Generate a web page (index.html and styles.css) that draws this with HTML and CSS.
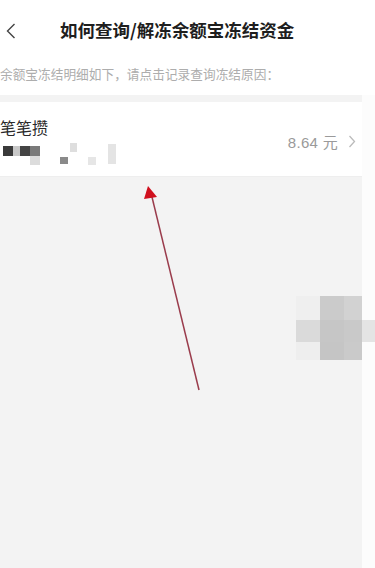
FILE: index.html
```html
<!DOCTYPE html>
<html lang="zh-CN">
<head>
<meta charset="utf-8">
<title>如何查询/解冻余额宝冻结资金</title>
<link rel="stylesheet" href="styles.css">
</head>
<body>
<div class="page">
  <header class="header">
    <svg class="back" width="10" height="16" viewBox="0 0 10 16"><path d="M8.5 1 L1.5 8 L8.5 15" fill="none" stroke="#444" stroke-width="1.4"/></svg>
    <h1 class="title">如何查询/解冻余额宝冻结资金</h1>
  </header>
  <p class="hint">余额宝冻结明细如下，请点击记录查询冻结原因：</p>
  <div class="body">
    <div class="main">
      <div class="card">
        <div class="info">
          <div class="name">笔笔攒</div>
          <div class="blur">
            <span class="px" style="left:0;top:0;width:10px;height:10px;background:#3a3a3a"></span>
            <span class="px" style="left:10px;top:0;width:7px;height:10px;background:#c8c8c8"></span>
            <span class="px" style="left:17px;top:0;width:10px;height:10px;background:#444"></span>
            <span class="px" style="left:27px;top:0;width:10px;height:10px;background:#7a7a7a"></span>
            <span class="px" style="left:27px;top:10px;width:10px;height:9px;background:#dcdcdc"></span>
            <span class="px" style="left:57px;top:11px;width:8px;height:7px;background:#8a8a8a"></span>
            <span class="px" style="left:67px;top:-3px;width:7px;height:9px;background:#dedede"></span>
            <span class="px" style="left:85px;top:11px;width:8px;height:8px;background:#e6e6e6"></span>
            <span class="px" style="left:105px;top:-2px;width:8px;height:20px;background:#e4e4e4"></span>
          </div>
        </div>
        <div class="amount">8.64 元</div>
        <svg class="chev" width="8" height="13" viewBox="0 0 8 13"><path d="M1.5 1 L6.5 6.5 L1.5 12" fill="none" stroke="#bbb" stroke-width="1.3"/></svg>
      </div>
    </div>
    <div class="strip"></div>
  </div>
  <div class="mosaic">
    <span class="m" style="background:#efefef"></span>
    <span class="m" style="background:#cbcbcb"></span>
    <span class="m" style="background:#d2d2d2"></span>
    <span class="m" style="background:transparent"></span>
    <span class="m" style="background:#dadada"></span>
    <span class="m" style="background:#c6c6c6"></span>
    <span class="m" style="background:#c9c9c9"></span>
    <span class="m" style="background:#e4e4e4"></span>
    <span class="m" style="background:#eeeeee"></span>
    <span class="m" style="background:#c5c5c5"></span>
    <span class="m" style="background:#cacaca"></span>
    <span class="m" style="background:transparent"></span>
  </div>
  <svg class="arrow" width="375" height="568" viewBox="0 0 375 568">
    <line x1="199" y1="390" x2="151" y2="193" stroke="#9a3c4c" stroke-width="1.5"/>
    <polygon points="148,186 144,199 157,197" fill="#d0101e"/>
  </svg>
</div>
</body>
</html>
```

FILE: styles.css
```css
html, body {
  margin: 0;
  padding: 0;
  background: #fff;
}
.page {
  position: relative;
  width: 375px;
  height: 568px;
  overflow: hidden;
  display: flex;
  flex-direction: column;
  font-family: "Noto Sans CJK SC", "Liberation Sans", sans-serif;
}
.header {
  height: 60px;
  display: flex;
  align-items: center;
  flex-shrink: 0;
}
.back {
  margin-left: 6px;
  margin-top: 2px;
}
.title {
  margin: 0 0 0 44px;
  font-size: 17.5px;
  font-weight: 700;
  color: #1e1e1e;
  line-height: 24px;
  letter-spacing: 0;
}
.hint {
  margin: 0;
  height: 35px;
  padding-top: 5px;
  box-sizing: border-box;
  font-size: 12.7px;
  line-height: 18px;
  color: #adadad;
  white-space: nowrap;
}
.body {
  flex: 1;
  display: flex;
}
.main {
  width: 362px;
  background: #f3f3f3;
  padding-top: 7px;
}
.strip {
  flex: 1;
  background: #fcfcfc;
}
.card {
  height: 75px;
  background: #fff;
  display: flex;
  align-items: center;
  border-bottom: 1px solid #eeeeee;
  box-sizing: border-box;
}
.info {
  flex: 1;
  padding-top: 4px;
}
.name {
  font-size: 16px;
  line-height: 22px;
  color: #2a2a2a;
}
.blur {
  position: relative;
  height: 20px;
  margin-top: 8px;
  margin-left: 3px;
}
.px {
  position: absolute;
  display: block;
}
.amount {
  font-family: "Liberation Sans", "Noto Sans CJK SC", sans-serif;
  font-size: 15px;
  color: #9a9a9a;
  margin-top: 4px;
  letter-spacing: 0.3px;
}
.chev {
  margin: 4px 6px 0 10px;
}
.mosaic {
  position: absolute;
  left: 296px;
  top: 296px;
  display: grid;
  grid-template-columns: 24px 24px 18px 13px;
  grid-template-rows: 24px 22px 18px;
}
.m {
  display: block;
}
.arrow {
  position: absolute;
  left: 0;
  top: 0;
  pointer-events: none;
}
```
